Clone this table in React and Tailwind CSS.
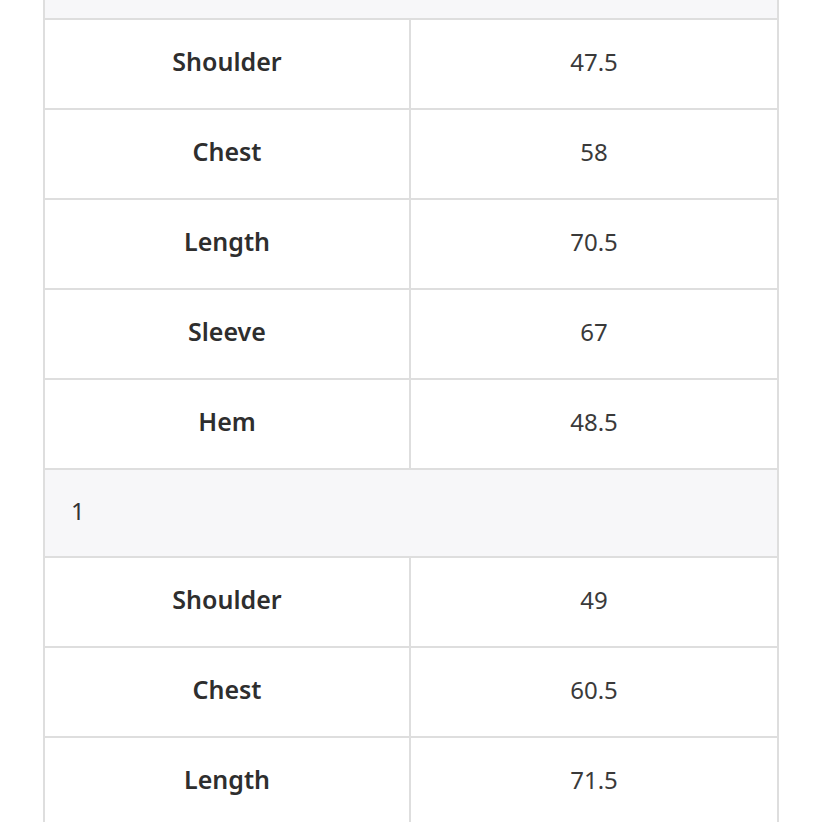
import React from 'react';

const groups = [
  {
    label: null,
    rows: [
      ['Shoulder', '47.5'],
      ['Chest', '58'],
      ['Length', '70.5'],
      ['Sleeve', '67'],
      ['Hem', '48.5'],
    ],
  },
  {
    label: '1',
    rows: [
      ['Shoulder', '49'],
      ['Chest', '60.5'],
      ['Length', '71.5'],
      ['Sleeve', '68'],
    ],
  },
];

const Row = ({ name, value }) => (
  <div className="flex h-[90px] border-b-2 border-[#dedede]">
    <div className="flex w-[366px] items-center justify-center border-r-2 border-[#dedede] pb-[4px] text-[25px] font-semibold text-[#2e2e2e]">
      {name}
    </div>
    <div className="flex flex-1 items-center justify-center pb-[4px] text-[#3a3a3a]">{value}</div>
  </div>
);

const App = () => {
  return (
    <div className="h-[822px] w-[822px] overflow-hidden bg-white">
      <div
        className="ml-[43px] w-[736px] border-x-2 border-[#dedede] text-[24px]"
        style={{ fontFamily: '"Noto Sans", "Noto Sans CJK KR", sans-serif' }}
      >
        <div className="h-[20px] border-b-2 border-[#dedede] bg-[#f7f7f9]" />
        {groups.map((g, gi) => (
          <div key={gi}>
            {g.label && (
              <div className="flex h-[88px] items-center border-b-2 border-[#dedede] bg-[#f7f7f9] pb-[4px] pl-[26px] text-[#333]">
                {g.label}
              </div>
            )}
            {g.rows.map(([name, value], i) => (
              <Row key={i} name={name} value={value} />
            ))}
          </div>
        ))}
      </div>
    </div>
  );
};

export default App;
